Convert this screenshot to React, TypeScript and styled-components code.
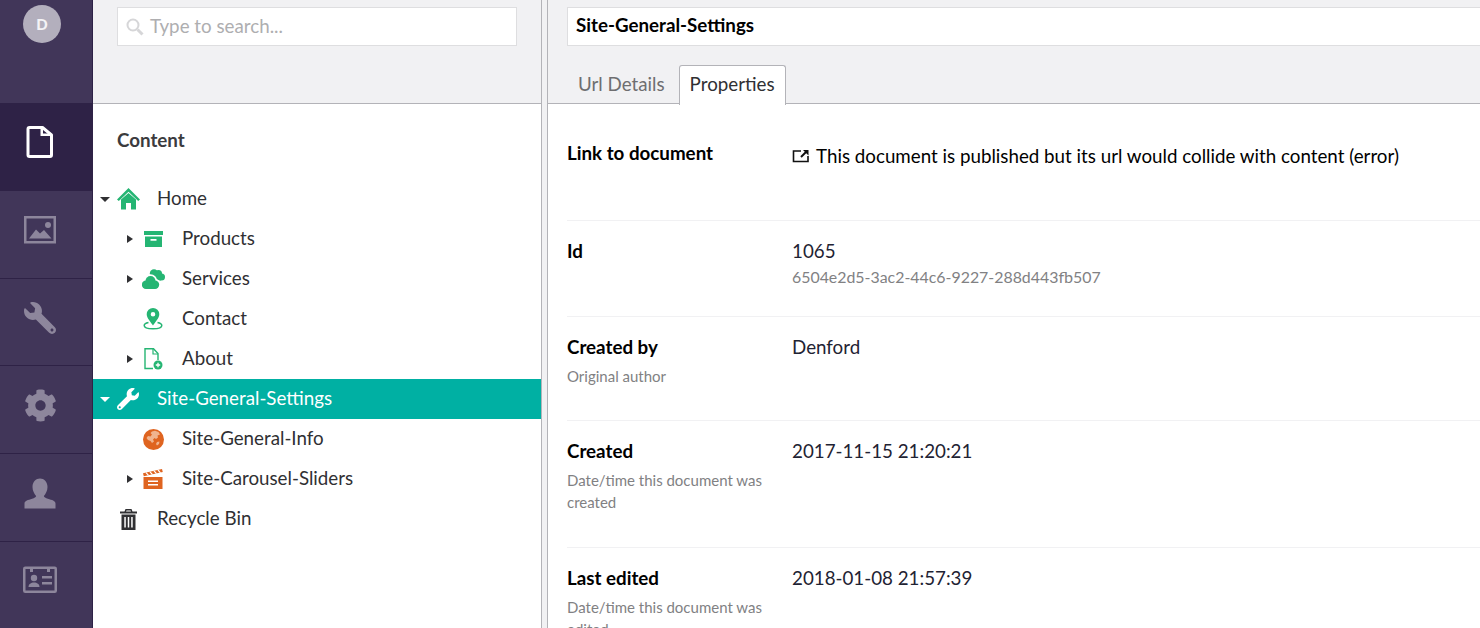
import React from 'react';
import styled, { createGlobalStyle } from 'styled-components';
import { FaCog, FaWrench } from 'react-icons/fa';

const colors = {
  section: '#413659',
  sectionDark: '#2e2246',
  sectionIcon: '#8d869c',
  panel: '#f1f1f3',
  line: '#b3b3b8',
  inputBorder: '#dedee0',
  rowLine: '#f1f1f3',
  green: '#25b573',
  orange: '#df6420',
  teal: '#00b0a3',
  text: '#303033',
  muted: '#818183',
};

const GlobalStyle = createGlobalStyle`
  html, body {
    margin: 0;
    height: 100%;
    overflow: hidden;
    background: #fff;
    font-family: Lato, "Open Sans", sans-serif;
    font-size: 18.75px;
    color: ${colors.text};
  }
  * { box-sizing: border-box; }
`;

const Shell = styled.div`
  display: flex;
  width: 1480px;
  height: 628px;
  overflow: hidden;
`;

const Sections = styled.nav`
  width: 93px;
  flex-shrink: 0;
  display: flex;
  flex-direction: column;
  background: ${colors.section};
  border-right: 1px solid ${colors.sectionDark};
`;

const AvatarArea = styled.div`
  height: 103px;
  flex-shrink: 0;
  padding: 5px 0 0 23px;
`;

const Avatar = styled.div`
  width: 38px;
  height: 38px;
  padding-bottom: 1px;
  border-radius: 50%;
  background: #b3afbd;
  color: #f4f3f6;
  font-size: 15px;
  font-weight: 900;
  display: flex;
  align-items: center;
  justify-content: center;
`;

const SectionItem = styled.div<{ $active?: boolean }>`
  height: 87.75px;
  flex-shrink: 0;
  padding: 0 12px 8px 0;
  display: flex;
  align-items: center;
  justify-content: center;
  color: ${(p) => (p.$active ? '#fff' : colors.sectionIcon)};
  background: ${(p) => (p.$active ? colors.sectionDark : 'transparent')};
  border-bottom: 1px solid ${(p) => (p.$active ? 'transparent' : colors.sectionDark)};
`;

const TreePanel = styled.aside`
  width: 448px;
  flex-shrink: 0;
  display: flex;
  flex-direction: column;
`;

const TreeHeader = styled.div`
  height: 104px;
  flex-shrink: 0;
  padding: 7px 24px 0;
  background: ${colors.panel};
  border-bottom: 1px solid ${colors.line};
`;

const SearchBox = styled.div`
  width: 400px;
  height: 39px;
  display: flex;
  align-items: center;
  gap: 6px;
  padding-left: 8px;
  background: #fff;
  border: 1px solid ${colors.inputBorder};
  color: #aeaeb0;
`;

const SearchText = styled.span`
  margin-top: -3px;
`;

const TreeTitle = styled.h3`
  margin: 0;
  padding: 24px 24px 0;
  height: 75px;
  font-size: 18.75px;
  line-height: 24px;
  font-weight: 700;
  color: #3b3b3e;
`;

const TreeRow = styled.div<{ $level: number; $selected?: boolean }>`
  height: 40px;
  display: flex;
  align-items: center;
  padding-left: ${(p) => 7 + p.$level * 25}px;
  background: ${(p) => (p.$selected ? colors.teal : 'transparent')};
  color: ${(p) => (p.$selected ? '#fff' : colors.text)};
`;

const TreeLabel = styled.span`
  margin-top: -4px;
`;

const Caret = styled.span<{ $open?: boolean; $hidden?: boolean }>`
  width: 10px;
  height: 10px;
  flex-shrink: 0;
  visibility: ${(p) => (p.$hidden ? 'hidden' : 'visible')};
  display: flex;
  align-items: center;
  justify-content: center;
  &::before {
    content: '';
    border-style: solid;
    border-color: transparent;
    ${(p) =>
      p.$open
        ? 'border-width: 5px 5px 0; border-top-color: currentColor;'
        : 'border-width: 4.5px 0 4.5px 6px; border-left-color: currentColor;'}
  }
`;

const TreeIconSlot = styled.span<{ $tint?: string }>`
  width: 24px;
  height: 24px;
  margin: 0 17px 0 6px;
  flex-shrink: 0;
  display: flex;
  align-items: center;
  justify-content: center;
  color: ${(p) => p.$tint || 'inherit'};
`;

const Splitter = styled.div`
  width: 7px;
  flex-shrink: 0;
  background: ${colors.panel};
  border-left: 1px solid ${colors.line};
  border-right: 1px solid ${colors.line};
`;

const Editor = styled.main`
  flex: 1;
  min-width: 0;
  display: flex;
  flex-direction: column;
`;

const EditorHeader = styled.header`
  height: 104px;
  flex-shrink: 0;
  padding: 7px 0 0 19px;
  background: ${colors.panel};
  border-bottom: 1px solid ${colors.line};
  display: flex;
  flex-direction: column;
`;

const NameInput = styled.div`
  width: 960px;
  height: 39px;
  flex-shrink: 0;
  padding-left: 8px;
  line-height: 33px;
  font-weight: 700;
  color: #000;
  background: #fff;
  border: 1px solid ${colors.inputBorder};
`;

const Tabs = styled.div`
  display: flex;
  margin-top: 19px;
  gap: 3px;
`;

const Tab = styled.div<{ $active?: boolean }>`
  height: 40px;
  padding: 0 10px;
  line-height: 36px;
  color: ${(p) => (p.$active ? colors.text : '#6e6e70')};
  background: ${(p) => (p.$active ? '#fff' : 'transparent')};
  border: 1px solid ${(p) => (p.$active ? colors.line : 'transparent')};
  border-bottom: none;
  border-radius: 3px 3px 0 0;
`;

const Props = styled.section`
  padding: 19px 0 0 19px;
`;

const PropRow = styled.div<{ $height: number }>`
  height: ${(p) => p.$height}px;
  padding-top: 18px;
  display: grid;
  grid-template-columns: 225px 1fr;
  align-content: start;
  border-bottom: 1px solid ${colors.rowLine};
  &:last-child { border-bottom: none; }
`;

const PropLabel = styled.div`
  font-weight: 700;
  line-height: 24px;
  color: #000;
`;

const PropHint = styled.div`
  width: 205px;
  margin-top: 6px;
  font-size: 15px;
  line-height: 22px;
  color: ${colors.muted};
`;

const PropValue = styled.div`
  line-height: 24px;
  color: #1f2333;
`;

const DocLink = styled.div`
  display: flex;
  align-items: center;
  gap: 6px;
  margin-top: 3px;
  line-height: 24px;
  color: #000;
`;

const Guid = styled.div`
  margin-top: 3px;
  font-size: 15.9px;
  line-height: 22px;
  color: ${colors.muted};
`;

const DocumentIcon = () => (
  <svg width="28" height="34" viewBox="0 0 28 34" fill="none">
    <path d="M3.5 2.5H16.5L25.5 10V30a1.5 1.5 0 0 1-1.5 1.5H3.5A1.5 1.5 0 0 1 2 30V4A1.5 1.5 0 0 1 3.5 2.5Z" stroke="currentColor" strokeWidth="3" strokeLinejoin="round" />
    <path d="M14.5 2.5H17V8.5H25V11H14.5Z" fill="currentColor" />
  </svg>
);

const PictureIcon = () => (
  <svg width="32" height="28" viewBox="0 0 32 28" fill="none">
    <rect x="1.25" y="1.25" width="29.5" height="25" stroke="currentColor" strokeWidth="2.5" />
    <circle cx="24" cy="9" r="3" fill="currentColor" />
    <path d="M5 22.5L12 13.5 16 17.5 20 14 27.5 22.5Z" fill="currentColor" />
  </svg>
);

const PersonIcon = () => (
  <svg width="32" height="31" viewBox="0 0 32 31" fill="none">
    <path d="M16 0.5c4 0 7.5 3.2 7.5 8.5 0 3.8-1.8 6.8-3.6 9 .3 1.4 1.6 2 4 2.8 4 1.2 7.6 2.2 7.6 4.7V30.5H.5v-5c0-2.5 3.6-3.5 7.6-4.7 2.4-.8 3.7-1.4 4-2.8-1.8-2.2-3.6-5.2-3.6-9C8.5 3.700 12 .5 16 .5Z" fill="currentColor" />
  </svg>
);

const CardIcon = () => (
  <svg width="34" height="30" viewBox="0 0 34 30" fill="none">
    <rect x="1.25" y="1.75" width="31.500" height="24" rx="1" stroke="currentColor" strokeWidth="2.5" />
    <path d="M7 2h3v4H7zM24 2h3v4h-3z" fill="currentColor" />
    <circle cx="11" cy="12" r="3.200" fill="currentColor" />
    <path d="M5.500 21c0-3 2.500-4.500 5.500-4.500s5.500 1.500 5.500 4.500Z" fill="currentColor" />
    <path d="M19 10h10v2.500H19zM19 16h10v2.500H19z" fill="currentColor" />
  </svg>
);

const HomeIcon = () => (
  <svg width="23" height="22" viewBox="0 0 23 22" fill="currentColor">
    <path d="M11.500 0L23 11.500 21.200 13 11.500 3.700 1.800 13 0 11.500Z" />
    <path d="M4 11.500L11.500 5 19 11.500V21.500H14V15H9V21.500H4Z" />
  </svg>
);

const ArchiveIcon = () => (
  <svg width="19" height="16" viewBox="0 0 19 16" fill="currentColor">
    <path d="M0 0H19V4H0Z" />
    <path fillRule="evenodd" d="M1 5.500H18V16H1ZM6.500 8V9.800H12.500V8Z" />
  </svg>
);

const CloudsIcon = () => (
  <svg width="23" height="20" viewBox="0 0 23 20" fill="currentColor">
    <circle cx="12" cy="4.500" r="4.200" />
    <circle cx="16.500" cy="4.500" r="3.500" />
    <circle cx="19.500" cy="8" r="3.500" />
    <path d="M10 5H19V11.500H15Z" />
    <g stroke="#fff" strokeWidth="3.500">
      <circle cx="4" cy="15.800" r="4.200" />
      <circle cx="8.500" cy="12" r="5" />
      <circle cx="13" cy="15.800" r="4.200" />
    </g>
    <circle cx="4" cy="15.800" r="4.200" />
    <circle cx="8.500" cy="12" r="5" />
    <circle cx="13" cy="15.800" r="4.200" />
    <path d="M4 13H13V20H4Z" />
  </svg>
);

const PinIcon = () => (
  <svg width="20" height="22" viewBox="0 0 20 22" fill="none">
    <path fillRule="evenodd" d="M10 0a6.300 6.300 0 0 1 6.300 6.300C16.300 10 12 14.500 10 17.500 8 14.500 3.700 10 3.700 6.300A6.300 6.300 0 0 1 10 0ZM10 4a2.300 2.300 0 1 0 0 4.600A2.300 2.300 0 0 0 10 4Z" fill="currentColor" />
    <path d="M5.500 14.500C3 15 1.200 16 1.200 17.500c0 2 3.900 3.300 8.800 3.300s8.800-1.300 8.800-3.300c0-1.500-1.800-2.500-4.300-3" stroke="currentColor" strokeWidth="1.500" />
  </svg>
);

const DocPlusIcon = () => (
  <svg width="19" height="22" viewBox="0 0 19 22" fill="none">
    <path d="M9 20.500H1V.8H9.500L14 5.500V12" stroke="currentColor" strokeWidth="1.400" />
    <path d="M9 1V6H14" stroke="currentColor" strokeWidth="1.200" />
    <circle cx="14" cy="17" r="4.500" fill="currentColor" />
    <path d="M11.800 17H16.200M14 14.800V19.200" stroke="#fff" strokeWidth="1.300" />
  </svg>
);

const GlobeIcon = () => (
  <svg width="21" height="21" viewBox="0 0 21 21">
    <circle cx="10.500" cy="10.500" r="10.500" fill="currentColor" />
    <path d="M9 2.500L12 1.800 15.500 3 17 5.500 14.500 6.500 15 8.500 13 10 11.500 9 10 10.500 11 12.500 9 14 7.500 12 5 11 3.500 9 5 7 7.500 7.500 9 5.500 7.500 4ZM14 13L16.500 12.500 16 15 14 16.500 13 15Z" fill="#f0b48e" />
  </svg>
);

const ClapperIcon = () => (
  <svg width="20" height="20" viewBox="0 0 20 20" fill="currentColor">
    <path d="M0 4.200L19 0l.8 3L.8 7.200Z" />
    <path d="M3 3.600l2.500 2.800M7 2.800l2.500 2.800M11 1.800l2.500 2.800M15 1l2.500 2.800" stroke="#fff" strokeWidth="1.200" />
    <path fillRule="evenodd" d="M.5 8H19.500V20H.5ZM5 11.500V13H15V11.500ZM5 15V16.500H15V15Z" />
  </svg>
);

const TrashIcon = () => (
  <svg width="17" height="21" viewBox="0 0 17 21" fill="currentColor">
    <path d="M5.500 0H11.500L12.500 2.500H17V4.500H0V2.500H4.500ZM6.500 1.500L6 2.500H11L10.500 1.500Z" />
    <path fillRule="evenodd" d="M1.500 5.500H15.500V21H1.500ZM4.300 8V18.500H5.800V8ZM7.750 8V18.500H9.250V8ZM11.200 8V18.500H12.700V8Z" />
  </svg>
);

const SearchIcon = () => (
  <svg width="18" height="18" viewBox="0 0 18 18" fill="none" stroke="#d6d6d8">
    <circle cx="7" cy="7" r="5.500" strokeWidth="2" />
    <path d="M11.500 11.500L16.500 16.500" strokeWidth="3" />
  </svg>
);

const ExternalIcon = () => (
  <svg width="18" height="14" viewBox="0 0 18 14" fill="none" stroke="#111">
    <path d="M9 2H1.500V12.500H16V7" strokeWidth="1.600" />
    <path d="M9 8L14.500 2.500" strokeWidth="2" />
    <path d="M11 1H16.500V6.500Z" fill="#111" strokeWidth="0" />
  </svg>
);

const Flip = styled.span`
  display: flex;
  transform: scaleX(-1);
`;

const tree = [
  { label: 'Home', level: 0, open: true, color: colors.green, icon: <HomeIcon /> },
  { label: 'Products', level: 1, color: colors.green, icon: <ArchiveIcon /> },
  { label: 'Services', level: 1, color: colors.green, icon: <CloudsIcon /> },
  { label: 'Contact', level: 1, leaf: true, color: colors.green, icon: <PinIcon /> },
  { label: 'About', level: 1, color: colors.green, icon: <DocPlusIcon /> },
  { label: 'Site-General-Settings', level: 0, open: true, selected: true, icon: <FaWrench size={22} /> },
  { label: 'Site-General-Info', level: 1, leaf: true, color: colors.orange, icon: <GlobeIcon /> },
  { label: 'Site-Carousel-Sliders', level: 1, color: colors.orange, icon: <ClapperIcon /> },
  { label: 'Recycle Bin', level: 0, leaf: true, icon: <TrashIcon /> },
];

const App: React.FC = () => (
  <Shell>
    <GlobalStyle />
    <Sections>
      <AvatarArea>
        <Avatar>D</Avatar>
      </AvatarArea>
      <SectionItem $active><DocumentIcon /></SectionItem>
      <SectionItem><PictureIcon /></SectionItem>
      <SectionItem><Flip><FaWrench size={32} /></Flip></SectionItem>
      <SectionItem><FaCog size={33} /></SectionItem>
      <SectionItem><PersonIcon /></SectionItem>
      <SectionItem><CardIcon /></SectionItem>
    </Sections>

    <TreePanel>
      <TreeHeader>
        <SearchBox>
          <SearchIcon />
          <SearchText>Type to search...</SearchText>
        </SearchBox>
      </TreeHeader>
      <TreeTitle>Content</TreeTitle>
      {tree.map((item) => (
        <TreeRow key={item.label} $level={item.level} $selected={item.selected}>
          <Caret $open={item.open} $hidden={item.leaf} />
          <TreeIconSlot $tint={item.color}>{item.icon}</TreeIconSlot>
          <TreeLabel>{item.label}</TreeLabel>
        </TreeRow>
      ))}
    </TreePanel>

    <Splitter />

    <Editor>
      <EditorHeader>
        <NameInput>Site-General-Settings</NameInput>
        <Tabs>
          <Tab>Url Details</Tab>
          <Tab $active>Properties</Tab>
        </Tabs>
      </EditorHeader>
      <Props>
        <PropRow $height={98}>
          <PropLabel>Link to document</PropLabel>
          <DocLink>
            <ExternalIcon />
            This document is published but its url would collide with content (error)
          </DocLink>
        </PropRow>
        <PropRow $height={96}>
          <PropLabel>Id</PropLabel>
          <div>
            <PropValue>1065</PropValue>
            <Guid>6504e2d5-3ac2-44c6-9227-288d443fb507</Guid>
          </div>
        </PropRow>
        <PropRow $height={104}>
          <div>
            <PropLabel>Created by</PropLabel>
            <PropHint>Original author</PropHint>
          </div>
          <PropValue>Denford</PropValue>
        </PropRow>
        <PropRow $height={127}>
          <div>
            <PropLabel>Created</PropLabel>
            <PropHint>Date/time this document was created</PropHint>
          </div>
          <PropValue>2017-11-15 21:20:21</PropValue>
        </PropRow>
        <PropRow $height={127}>
          <div>
            <PropLabel>Last edited</PropLabel>
            <PropHint>Date/time this document was edited</PropHint>
          </div>
          <PropValue>2018-01-08 21:57:39</PropValue>
        </PropRow>
      </Props>
    </Editor>
  </Shell>
);

export default App;
